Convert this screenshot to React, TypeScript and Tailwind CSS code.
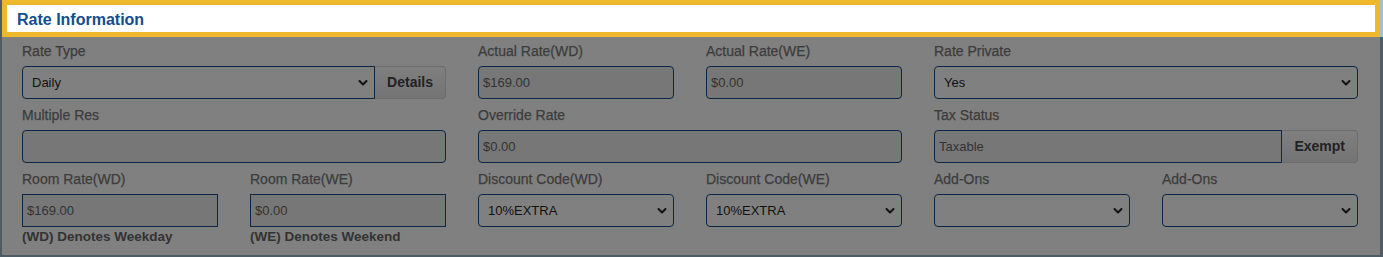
import React from 'react';

const labelCls = 'h-5 leading-5 text-[14px] text-[#3c3c3c] [-webkit-text-stroke:0.25px] whitespace-nowrap';
const roInputCls =
    'h-[33px] w-full border border-[#0d2644] bg-[#777777] pl-[4px] text-[13px] text-[#333333] outline-none';

function Chevron() {
    return (
        <svg
            className="pointer-events-none absolute right-[6px] top-1/2 -translate-y-1/2"
            width="10"
            height="7"
            viewBox="0 0 10 7"
        >
            <path d="M1.5 1.5 L5 5 L8.5 1.5" fill="none" stroke="#111111" strokeWidth="2" strokeLinecap="round" strokeLinejoin="round" />
        </svg>
    );
}

function SelectBox({ value, className = 'rounded' }: { value: string; className?: string }) {
    return (
        <div className={`relative h-[33px] w-full border border-[#0d2644] bg-[#808080] ${className}`}>
            <div className="flex h-full items-center pl-[9px] pt-px text-[13px] text-[#111111]">{value}</div>
            <Chevron />
        </div>
    );
}

function SideButton({ text }: { text: string }) {
    return (
        <button className="h-[33px] shrink-0 rounded-r border border-l-0 border-[#6c6c6c] bg-gradient-to-b from-[#7f7f7f] to-[#747474] px-[12px] text-[14px] font-bold text-[#222222]">
            {text}
        </button>
    );
}

function Field({ label, span = 1, children, note }: { label: string; span?: number; children: React.ReactNode; note?: string }) {
    return (
        <div className={`flex flex-col ${span === 2 ? 'col-span-2' : ''}`}>
            <div className={labelCls}>{label}</div>
            <div className="mt-[5px]">{children}</div>
            {note && <div className="mt-[2px] h-4 leading-4 text-[13.5px] font-bold text-[#333333]">{note}</div>}
        </div>
    );
}

export default function App() {
    return (
        <div className="flex h-[257px] w-[1383px] flex-col bg-[#808080] font-['Liberation_Sans',Arial,sans-serif]">
            {/* highlighted section header */}
            <div className="flex h-[37px]">
                <div className="w-[2px] bg-[#4e5c65]" />
                <div className="flex flex-1 items-center border-[5px] border-[#edb82c] bg-white pl-[10px] pt-[3px]">
                    <span className="text-[16px] font-bold text-[#114e8f]">Rate Information</span>
                </div>
                <div className="w-[3px] bg-[#a2c0d0]" />
            </div>

            <div className="flex flex-1 border-b-2 border-[#4e5c65]">
                <div className="w-[2px] bg-[#4e5c65]" />
                <div className="flex-1 pl-[20px] pr-[22px] pt-[4px]">
                    <div className="grid grid-cols-6 gap-x-8 gap-y-[6px]">
                        {/* row 1 */}
                        <Field label="Rate Type" span={2}>
                            <div className="flex">
                                <SelectBox value="Daily" className="rounded-l" />
                                <SideButton text="Details" />
                            </div>
                        </Field>
                        <Field label="Actual Rate(WD)">
                            <input readOnly value="$169.00" className={`${roInputCls} rounded`} />
                        </Field>
                        <Field label="Actual Rate(WE)">
                            <input readOnly value="$0.00" className={`${roInputCls} rounded`} />
                        </Field>
                        <Field label="Rate Private" span={2}>
                            <SelectBox value="Yes" />
                        </Field>

                        {/* row 2 */}
                        <Field label="Multiple Res" span={2}>
                            <input readOnly value="" className={`${roInputCls} rounded`} />
                        </Field>
                        <Field label="Override Rate" span={2}>
                            <input readOnly value="$0.00" className={`${roInputCls} rounded`} />
                        </Field>
                        <Field label="Tax Status" span={2}>
                            <div className="flex">
                                <input readOnly value="Taxable" className={`${roInputCls} flex-1 rounded-l`} />
                                <SideButton text="Exempt" />
                            </div>
                        </Field>

                        {/* row 3 */}
                        <Field label="Room Rate(WD)" note="(WD) Denotes Weekday">
                            <input readOnly value="$169.00" className={roInputCls} />
                        </Field>
                        <Field label="Room Rate(WE)" note="(WE) Denotes Weekend">
                            <input readOnly value="$0.00" className={roInputCls} />
                        </Field>
                        <Field label="Discount Code(WD)">
                            <SelectBox value="10%EXTRA" />
                        </Field>
                        <Field label="Discount Code(WE)">
                            <SelectBox value="10%EXTRA" />
                        </Field>
                        <Field label="Add-Ons">
                            <SelectBox value="" />
                        </Field>
                        <Field label="Add-Ons">
                            <SelectBox value="" />
                        </Field>
                    </div>
                </div>
                <div className="w-[3px] bg-[#4e5c65]" />
            </div>
        </div>
    );
}
